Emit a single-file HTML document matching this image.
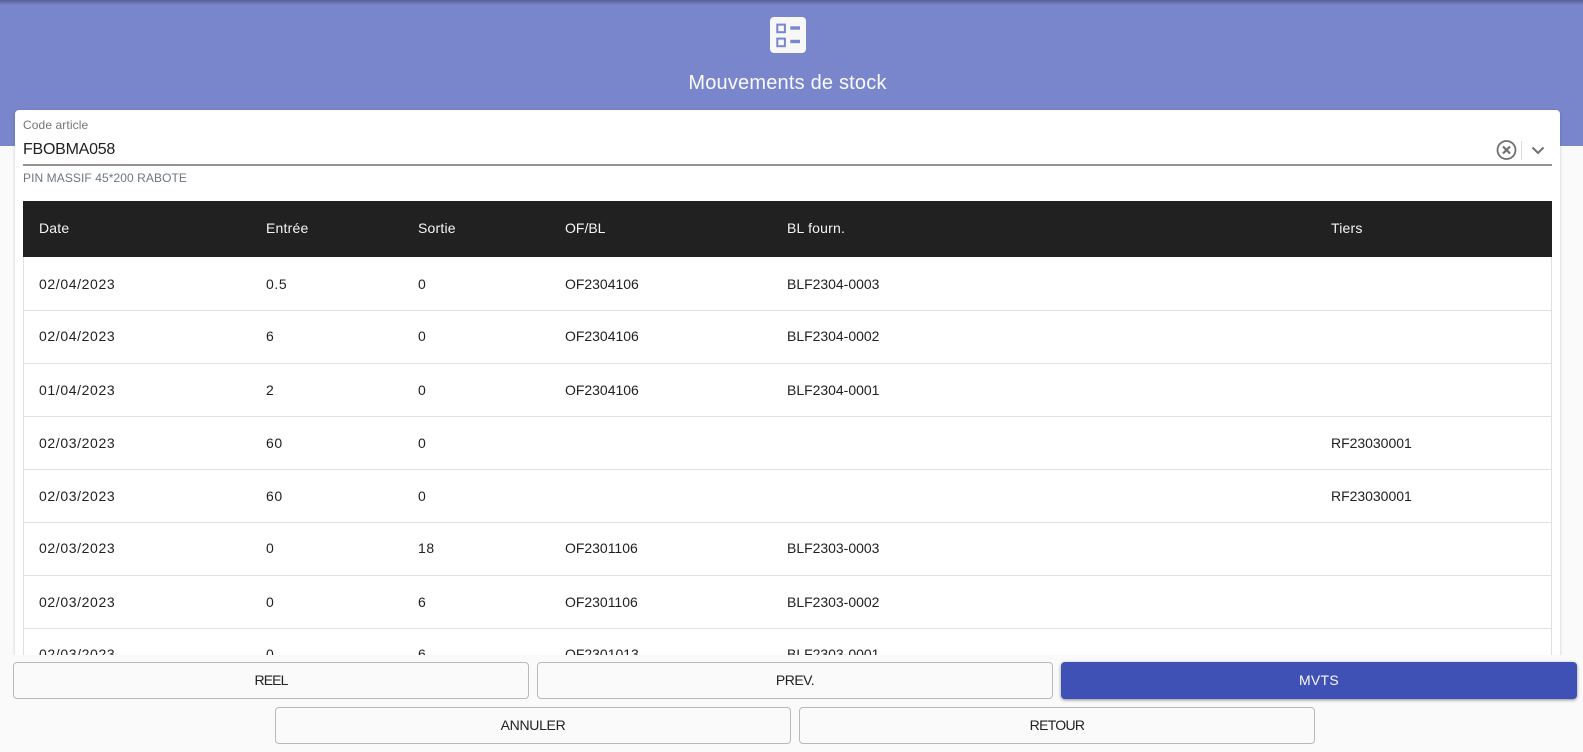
<!DOCTYPE html>
<html lang="fr"><head><meta charset="utf-8"><title>Mouvements de stock</title>
<style>
*{box-sizing:border-box}
html,body{margin:0;padding:0}
body{width:1583px;height:752px;overflow:hidden;position:relative;background:#fafafa;font-family:"Liberation Sans",Arial,sans-serif;color:#212121}
.abs{position:absolute}
#hd{left:0;top:0;width:1583px;height:146px;background:#7986cb}
#hdshadow{left:0;top:0;width:1583px;height:5px;background:linear-gradient(#565f92,#7986cb)}
#title{left:0;top:69px;width:1575px;text-align:center;font-size:20px;line-height:28px;color:#fafafa;letter-spacing:.2px}
#card{left:15px;top:110px;width:1545px;height:560px;background:#fff;border-radius:4px 4px 0 0;box-shadow:0 1px 3px rgba(0,0,0,.2)}
#lbl{left:23px;top:117px;font-size:12px;line-height:16px;color:#757575;letter-spacing:.1px}
#val{left:23px;top:139px;font-size:16px;line-height:22px;color:#212121;letter-spacing:-.25px}
#line{left:23px;top:164px;width:1529px;height:2px;background:#949494}
#hint{left:23px;top:170px;font-size:12px;line-height:16px;color:#6b7785;letter-spacing:.08px}
#sep{left:1521px;top:141px;width:1px;height:19px;background:#ddd}
#tb{left:23px;top:201px;width:1529px;height:470px;background:#fff;border-left:1px solid #e0e0e0;border-right:1px solid #e0e0e0}
#th{left:23px;top:201px;width:1529px;height:56px;background:#212121}
.h,.c{position:absolute;font-size:14px;line-height:20px;white-space:nowrap}
.h{color:#f5f5f5;top:218px;letter-spacing:.2px}
.c{color:#212121;letter-spacing:.62px}
.n{letter-spacing:-.02px}
.r{position:absolute;left:23px;width:1529px;height:1px;background:#e0e0e0}
#bot{left:0;top:655px;width:1583px;height:97px;background:#fafafa}
.b{position:absolute;height:37px;width:516px;background:#fafafa;border:1px solid #b9b9b9;border-radius:4px;text-align:center;font-size:14px;line-height:35px;color:#212121}
.p{background:#3f51b5;border:0;color:#fafafa;line-height:37px;box-shadow:0 1px 3px rgba(0,0,0,.45);letter-spacing:.3px}
</style></head><body>
<div class="abs" id="hd"></div><div class="abs" id="hdshadow"></div>
<svg class="abs" style="left:770px;top:17px" width="36" height="36" viewBox="0 0 36 36">
<rect width="36" height="36" rx="4" fill="#f7f7f7"/>
<rect x="7.300" y="7.600" width="7.600" height="7.600" fill="none" stroke="#7986cb" stroke-width="2"/>
<rect x="7.300" y="21.600" width="7.600" height="7.600" fill="none" stroke="#7986cb" stroke-width="2"/>
<rect x="20.300" y="9.300" width="9.700" height="3.400" fill="#7986cb"/>
<rect x="20.300" y="22.800" width="9.700" height="3.400" fill="#7986cb"/>
</svg>
<div class="abs" id="title">Mouvements de stock</div>
<div class="abs" id="card"></div>
<div class="abs" id="lbl">Code article</div>
<div class="abs" id="val">FBOBMA058</div>
<svg class="abs" style="left:1496px;top:140px" width="21" height="20" viewBox="0 0 21 20"><circle cx="10.500" cy="10" r="9" fill="none" stroke="#707070" stroke-width="1.800"/><path d="M7 6.500l7 7M14 6.500l-7 7" stroke="#707070" stroke-width="2.200" fill="none"/></svg>
<div class="abs" id="sep"></div>
<svg class="abs" style="left:1530px;top:144px" width="16" height="12" viewBox="0 0 16 12"><path d="M2.500 3.500L8 9l5.500-5.500" fill="none" stroke="#707070" stroke-width="2"/></svg>
<div class="abs" id="line"></div>
<div class="abs" id="hint">PIN MASSIF 45*200 RABOTE</div>
<div class="abs" id="tb"></div>
<div class="abs" id="th"></div>
<div class="h" style="left:39px">Date</div><div class="h" style="left:266px">Entrée</div><div class="h" style="left:418px">Sortie</div><div class="h" style="left:565px;letter-spacing:0">OF/BL</div><div class="h" style="left:787px">BL fourn.</div><div class="h" style="left:1331px">Tiers</div>

<div class="c" style="left:39px;top:274px">02/04/2023</div><div class="c" style="left:266px;top:274px">0.5</div><div class="c" style="left:418px;top:274px">0</div><div class="c n" style="left:565px;top:274px">OF2304106</div><div class="c n" style="left:787px;top:274px">BLF2304-0003</div>
<div class="r" style="top:310px"></div>
<div class="c" style="left:39px;top:326px">02/04/2023</div><div class="c" style="left:266px;top:326px">6</div><div class="c" style="left:418px;top:326px">0</div><div class="c n" style="left:565px;top:326px">OF2304106</div><div class="c n" style="left:787px;top:326px">BLF2304-0002</div>
<div class="r" style="top:363px"></div>
<div class="c" style="left:39px;top:380px">01/04/2023</div><div class="c" style="left:266px;top:380px">2</div><div class="c" style="left:418px;top:380px">0</div><div class="c n" style="left:565px;top:380px">OF2304106</div><div class="c n" style="left:787px;top:380px">BLF2304-0001</div>
<div class="r" style="top:416px"></div>
<div class="c" style="left:39px;top:433px">02/03/2023</div><div class="c" style="left:266px;top:433px">60</div><div class="c" style="left:418px;top:433px">0</div><div class="c n" style="left:1331px;top:433px">RF23030001</div>
<div class="r" style="top:469px"></div>
<div class="c" style="left:39px;top:486px">02/03/2023</div><div class="c" style="left:266px;top:486px">60</div><div class="c" style="left:418px;top:486px">0</div><div class="c n" style="left:1331px;top:486px">RF23030001</div>
<div class="r" style="top:522px"></div>
<div class="c" style="left:39px;top:538px">02/03/2023</div><div class="c" style="left:266px;top:538px">0</div><div class="c" style="left:418px;top:538px">18</div><div class="c n" style="left:565px;top:538px">OF2301106</div><div class="c n" style="left:787px;top:538px">BLF2303-0003</div>
<div class="r" style="top:575px"></div>
<div class="c" style="left:39px;top:592px">02/03/2023</div><div class="c" style="left:266px;top:592px">0</div><div class="c" style="left:418px;top:592px">6</div><div class="c n" style="left:565px;top:592px">OF2301106</div><div class="c n" style="left:787px;top:592px">BLF2303-0002</div>
<div class="r" style="top:628px"></div>
<div class="c" style="left:39px;top:644px">02/03/2023</div><div class="c" style="left:266px;top:644px">0</div><div class="c" style="left:418px;top:644px">6</div><div class="c n" style="left:565px;top:644px">OF2301013</div><div class="c n" style="left:787px;top:644px">BLF2303-0001</div>

<div class="abs" id="bot"></div>
<div class="b" style="left:13px;top:662px;letter-spacing:-.9px">REEL</div>
<div class="b" style="left:537px;top:662px;letter-spacing:-.5px">PREV.</div>
<div class="b p" style="left:1061px;top:662px">MVTS</div>
<div class="b" style="left:275px;top:707px;letter-spacing:-.3px">ANNULER</div>
<div class="b" style="left:799px;top:707px;letter-spacing:-.7px">RETOUR</div>
</body></html>
